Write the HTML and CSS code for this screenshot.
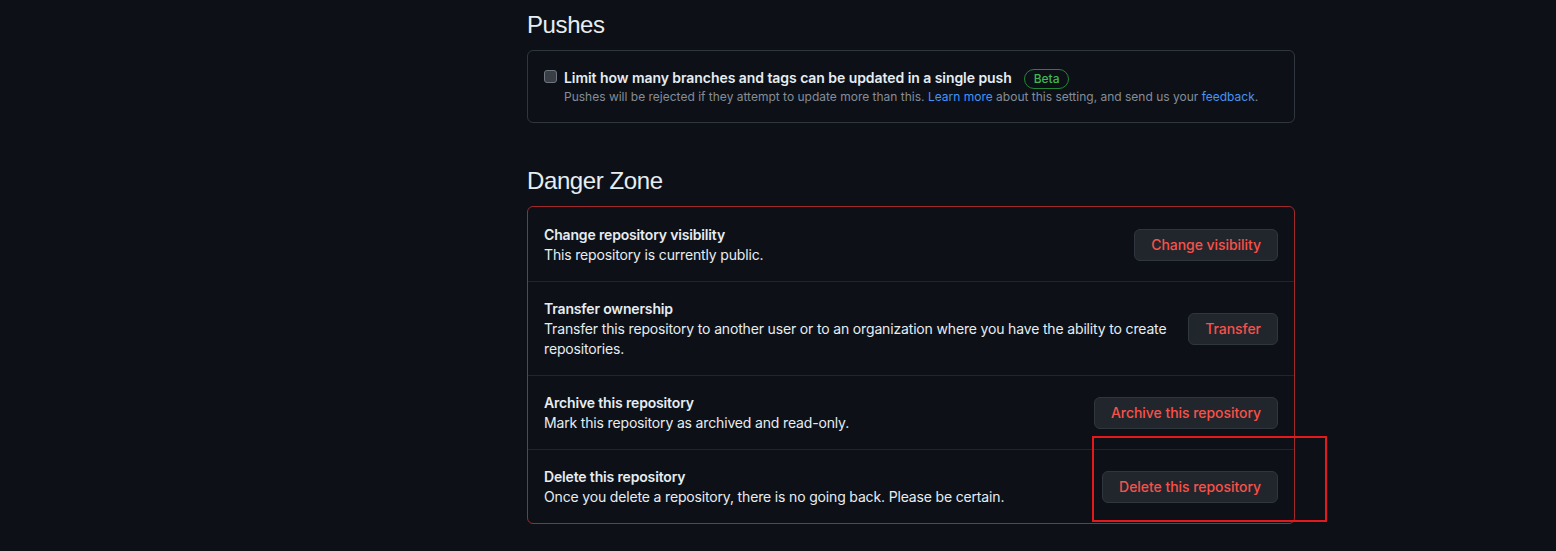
FILE: index.html
```html
<!DOCTYPE html>
<html lang="en">
<head>
<meta charset="utf-8">
<title>Settings</title>
<link rel="stylesheet" href="styles.css">
</head>
<body>
<div class="layout">
  <aside class="sidebar"></aside>
  <main class="content">
    <h2 class="subhead">Pushes</h2>
    <div class="box">
      <div class="check-row">
        <input type="checkbox" class="checkbox">
        <div class="check-body">
          <div class="check-label">Limit how many branches and tags can be updated in a single push <span class="badge">Beta</span></div>
          <p class="note">Pushes will be rejected if they attempt to update more than this. <a href="#">Learn more</a> about this setting, and send us your <a href="#">feedback</a>.</p>
        </div>
      </div>
    </div>

    <h2 class="subhead danger-head">Danger Zone</h2>
    <div class="box danger">
      <div class="danger-row">
        <div class="danger-text">
          <strong>Change repository visibility</strong>
          <p>This repository is currently public.</p>
        </div>
        <button class="btn-danger">Change visibility</button>
      </div>
      <div class="danger-row">
        <div class="danger-text">
          <strong>Transfer ownership</strong>
          <p>Transfer this repository to another user or to an organization where you have the ability to create repositories.</p>
        </div>
        <button class="btn-danger">Transfer</button>
      </div>
      <div class="danger-row">
        <div class="danger-text">
          <strong>Archive this repository</strong>
          <p>Mark this repository as archived and read-only.</p>
        </div>
        <button class="btn-danger">Archive this repository</button>
      </div>
      <div class="danger-row">
        <div class="danger-text">
          <strong>Delete this repository</strong>
          <p>Once you delete a repository, there is no going back. Please be certain.</p>
        </div>
        <button class="btn-danger">Delete this repository</button>
      </div>
    </div>
  </main>
</div>
<div class="highlight"></div>
</body>
</html>
```
FILE: styles.css
```css
* { box-sizing: border-box; }
html, body {
  margin: 0;
  background: #0d1117;
  color: #e6edf3;
  font-family: Inter, "Liberation Sans", Arial, sans-serif;
  font-size: 14px;
  line-height: 1.5;
}
.layout {
  display: grid;
  grid-template-columns: 527px 768px;
  padding-top: 7px;
}
.subhead {
  margin: 0 0 7px;
  font-family: "Liberation Sans", Arial, sans-serif;
  font-size: 24px;
  font-weight: 400;
  line-height: 36px;
  letter-spacing: -0.4px;
  color: #e6edf3;
}
.danger-head { margin-top: 40px; }
.box {
  border: 1px solid #30363d;
  border-radius: 6px;
}
.check-row {
  display: flex;
  padding: 16px;
  gap: 7px;
}
.checkbox {
  appearance: none;
  -webkit-appearance: none;
  width: 13px;
  height: 13px;
  margin: 3px 0 0;
  border: 1px solid #6e7681;
  border-radius: 3px;
  background: #3a3f46;
  flex: none;
}
.check-label {
  font-weight: 600;
  line-height: 21px;
  letter-spacing: -0.06px;
}
.badge {
  display: inline-block;
  margin: -3px 0 -3px 9px;
  padding: 0 8.5px;
  border: 1px solid #238636;
  border-radius: 2em;
  color: #3fb950;
  font-size: 12px;
  font-weight: 500;
  line-height: 18px;
  letter-spacing: 0;
  vertical-align: 0;
}
.note {
  margin: 0;
  font-size: 12px;
  line-height: 18px;
  color: #848d97;
}
.note a { color: #4493f8; text-decoration: none; }
.danger { border-color: #a0292b; }
.danger-row {
  display: flex;
  align-items: center;
  justify-content: space-between;
  gap: 16px;
  padding: 16px;
  border-top: 1px solid #21262d;
}
.danger-row:first-child { border-top-color: transparent; }
.danger-text {
  letter-spacing: -0.16px;
}
.danger-text strong {
  display: block;
  font-weight: 600;
  line-height: 21px;
}
.danger-text p {
  margin: 0;
  line-height: 20px;
}
.btn-danger {
  flex: none;
  height: 32px;
  padding: 0 16px;
  border: 1px solid #30363d;
  border-radius: 6px;
  background: #21262d;
  color: #f85149;
  font-family: inherit;
  font-size: 14px;
  font-weight: 500;
  letter-spacing: -0.05px;
}
.highlight {
  position: absolute;
  left: 1092px;
  top: 436px;
  width: 235px;
  height: 86px;
  border: 2px solid #e3191c;
}
```
